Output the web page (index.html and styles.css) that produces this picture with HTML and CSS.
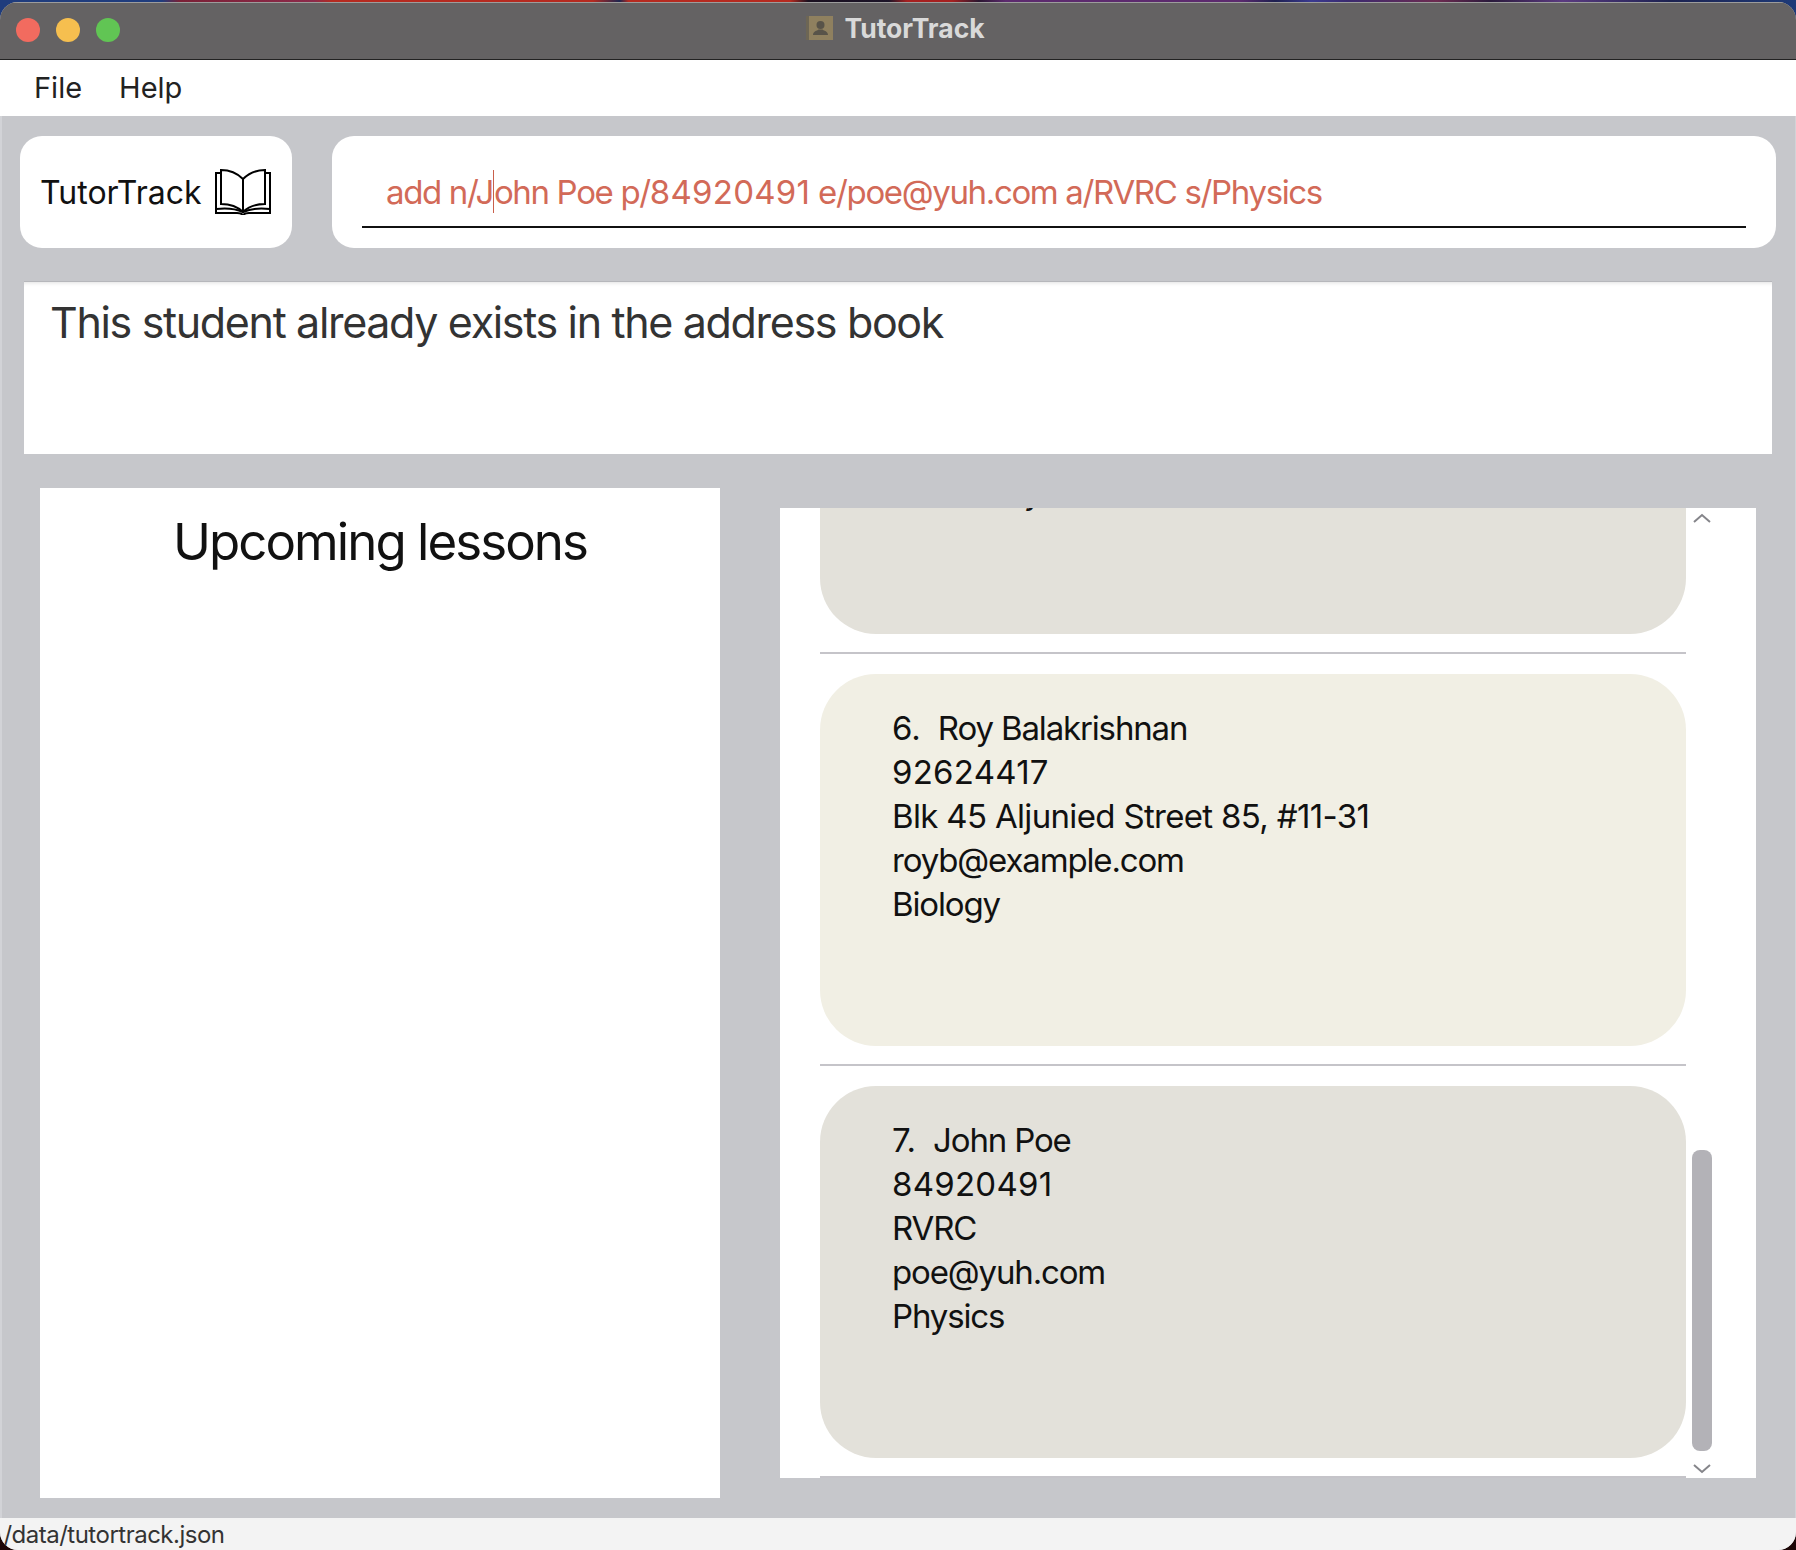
FILE: index.html
```html
<!DOCTYPE html>
<html lang="en">
<head>
<meta charset="utf-8">
<title>TutorTrack</title>
<link rel="stylesheet" href="styles.css">
</head>
<body>
<div class="window">
  <header class="titlebar">
    <div class="lights">
      <span class="light red"></span>
      <span class="light yellow"></span>
      <span class="light green"></span>
    </div>
    <div class="title">
      <svg class="app-icon" viewBox="0 0 27 24" aria-hidden="true">
        <rect x="0" y="0" width="27" height="24" fill="#8f805f"/>
        <rect x="0" y="0" width="3" height="24" fill="#6d6655"/>
        <circle cx="14.500" cy="9" r="4" fill="#585349"/>
        <path d="M7 19c0-4 4-4 5.500-5.500h4C18 15 22 15 22 19z" fill="#585349"/>
      </svg>
      <span>TutorTrack</span>
    </div>
  </header>
  <nav class="menubar">
    <span class="menu-item">File</span>
    <span class="menu-item">Help</span>
  </nav>
  <main class="content">
    <section class="top-row">
      <div class="logo-card">
        <span class="logo-text">TutorTrack</span>
        <svg class="book" viewBox="0 0 56 46" aria-hidden="true">
          <path d="M28 10C22 4 15 1 6 1v34c8 0 16 2 22 8 6-6 14-8 22-8V1c-9 0-16 3-22 9z"/>
          <path d="M28 10v33"/>
          <path d="M6 4H1v40h21c3 0 4 0 6 2 2-2 3-2 6-2h21V4h-5"/>
          <path d="M1 40c8-1 18-1 27 3 9-4 19-4 27-3"/>
        </svg>
      </div>
      <div class="command-card">
        <div class="command-box">
          <span class="command-text">add n/J<span class="caret"></span>ohn Poe p/<span class="digits">84920491</span> e/poe@yuh.com a/RVRC s/Physics</span>
        </div>
      </div>
    </section>
    <section class="result">This student already exists in the address book</section>
    <section class="panels">
      <div class="lessons">
        <h1 class="lessons-title">Upcoming lessons</h1>
      </div>
      <div class="students">
        <div class="list">
          <div class="list-inner">
            <article class="card card-even">
              <p><span class="index">5.</span>Irfan Ibrahim</p>
              <p class="digits">92492021</p>
              <p class="address">Blk 47 Tampines Street 20, #17-35</p>
              <p>irfan@example.com</p>
              <p>Chemistry</p>
            </article>
            <hr class="divider">
            <article class="card card-odd">
              <p><span class="index">6.</span>Roy Balakrishnan</p>
              <p class="digits">92624417</p>
              <p class="address">Blk 45 Aljunied Street 85, #11-31</p>
              <p>royb@example.com</p>
              <p>Biology</p>
            </article>
            <hr class="divider">
            <article class="card card-even">
              <p><span class="index">7.</span>John Poe</p>
              <p class="digits">84920491</p>
              <p>RVRC</p>
              <p>poe@yuh.com</p>
              <p>Physics</p>
            </article>
            <hr class="divider">
          </div>
        </div>
        <div class="scrollbar">
          <svg class="arrow" viewBox="0 0 18 10" aria-hidden="true"><path d="M1 9l8-7 8 7"/></svg>
          <div class="track"><div class="thumb"></div></div>
          <svg class="arrow" viewBox="0 0 18 10" aria-hidden="true"><path d="M1 1l8 7 8-7"/></svg>
        </div>
      </div>
    </section>
  </main>
  <footer class="status">./data/tutortrack.json</footer>
</div>
</body>
</html>
```
FILE: styles.css
```css
* { box-sizing: border-box; }
html, body { margin: 0; padding: 0; height: 100%; }
body {
  background-color: #1c0606;
  background-image: linear-gradient(90deg, #1f3c7d 0, #1f3c7d 9%, #7a2036 10%, #8c2a4a 17.500%, #b52a20 18.500%, #b52a20 33%, #1c2550 34.500%, #b52a20 35%, #b52a20 44%, #1a1020 45%, #1c1428 49.500%, #a52020 50.500%, #a52020 53%, #2a1630 54.500%, #5c2a6e 56%, #5c2a6e 69%, #1e2050 71%, #3a3a90 73%, #3a2a70 75%, #6c2a50 80%, #2a1a3c 83%, #5a3a80 87%, #1c2250 93%, #1e3a78 100%);
  background-size: 100% 30px;
  background-repeat: no-repeat;
  font-family: Inter, "Liberation Sans", sans-serif;
  overflow: hidden;
}
.window {
  margin-top: 2px;
  height: 1548px;
  display: flex;
  flex-direction: column;
  border-radius: 18px;
  overflow: hidden;
  background: #c6c7cb;
}
.titlebar {
  height: 58px;
  flex: none;
  display: flex;
  align-items: center;
  justify-content: center;
  position: relative;
  padding-bottom: 7px;
  background: #646263;
  border-top: 1px solid #9c9c9c;
  border-bottom: 1px solid #222;
}
.lights {
  position: absolute;
  left: 16px;
  top: 15px;
  display: flex;
  gap: 16px;
}
.light { width: 24px; height: 24px; border-radius: 50%; }
.red { background: #f26b5f; }
.yellow { background: #f6bf4f; }
.green { background: #61c554; }
.title {
  display: flex;
  align-items: center;
  gap: 11px;
  margin-left: -5px;
  color: #d9d9d9;
  font-weight: 700;
  font-size: 26.500px;
}
.app-icon { width: 27px; height: 24px; display: block; }
.menubar {
  height: 56px;
  flex: none;
  display: flex;
  align-items: center;
  gap: 37px;
  padding-left: 34px;
  padding-bottom: 1px;
  background: #fff;
  color: #222;
  font-size: 29px;
}
.content {
  flex: 1;
  display: flex;
  flex-direction: column;
  min-height: 0;
  box-shadow: inset 2px 0 #d2d3d7, inset -1px 0 #d2d3d7;
}
.top-row {
  display: flex;
  gap: 40px;
  padding: 20px 20px 0 20px;
}
.logo-card {
  width: 272px;
  height: 112px;
  flex: none;
  display: flex;
  align-items: center;
  gap: 13px;
  padding-left: 20px;
  background: #fff;
  border-radius: 22px;
  font-size: 32px;
  color: #111;
}
.book { width: 56px; height: 46px; flex: none; fill: none; stroke: #000; stroke-width: 2; }
.command-card {
  flex: 1;
  height: 112px;
  padding: 0 30px 20px;
  background: #fff;
  border-radius: 22px;
  display: flex;
}
.command-box {
  flex: 1;
  display: flex;
  align-items: center;
  padding: 20px 24px 0;
  border-bottom: 2px solid #111;
}
.command-text {
  color: #d26a58;
  font-size: 33px;
  letter-spacing: -1.350px;
  white-space: nowrap;
}
.command-text .digits { letter-spacing: 0.250px; }
.caret {
  display: inline-block;
  width: 1px;
  height: 43px;
  margin: 0;
  vertical-align: -9px;
  background: #c9604c;
}
.result {
  height: 172px;
  margin: 34px 24px 0 24px;
  padding: 14px 26px;
  background: #fff;
  color: #333;
  font-size: 43px;
  letter-spacing: -1.340px;
  box-shadow: inset 0 5px 4px -4px rgba(0, 0, 0, 0.12), 0 -1px 0 #b6b7bb;
}
.panels {
  flex: 1;
  display: flex;
  align-items: flex-start;
  padding: 34px 40px 0;
  min-height: 0;
}
.lessons {
  width: 680px;
  height: 1010px;
  flex: none;
  background: #fff;
}
.lessons-title {
  margin: 23px 0 0;
  text-align: center;
  font-size: 51px;
  font-weight: 400;
  letter-spacing: -1.950px;
  color: #111;
}
.students {
  width: 976px;
  height: 970px;
  flex: none;
  margin: 20px 0 0 60px;
  display: flex;
  align-items: flex-start;
}
.list {
  width: 906px;
  height: 970px;
  flex: none;
  padding-left: 40px;
  background: #fff;
  overflow: hidden;
}
.list-inner { margin-top: -246px; }
.card {
  height: 372px;
  padding: 32px 72px;
  border-radius: 56px;
  color: #111;
  font-size: 33px;
  letter-spacing: -1.150px;
}
.card p { margin: 0; height: 44px; line-height: 44px; white-space: nowrap; }
.card .digits { letter-spacing: 0.250px; }
.card .address { letter-spacing: -0.670px; }
.index { display: inline-block; margin-right: 17px; letter-spacing: 0; }
.card-odd { background: #f1efe4; }
.card-even { background: #e3e1da; }
.divider {
  height: 2px;
  margin: 18px 0 20px;
  border: 0;
  background: #c5c4c9;
}
.scrollbar {
  width: 70px;
  height: 970px;
  flex: none;
  display: flex;
  flex-direction: column;
  padding: 5px 0 4px 6px;
  background: #fff;
}
.arrow { width: 18px; height: 10px; margin-left: 1px; flex: none; fill: none; stroke: #85858a; stroke-width: 2; }
.track { flex: 1; width: 20px; display: flex; align-items: flex-end; padding-bottom: 13px; }
.thumb { width: 20px; height: 301px; background: #b3b2b7; border-radius: 8px; }
.status {
  height: 32px;
  flex: none;
  background: #f3f3f3;
  color: #333;
  font-size: 24px;
  line-height: 33px;
  letter-spacing: -0.500px;
  white-space: nowrap;
  text-indent: -3px;
}
```
